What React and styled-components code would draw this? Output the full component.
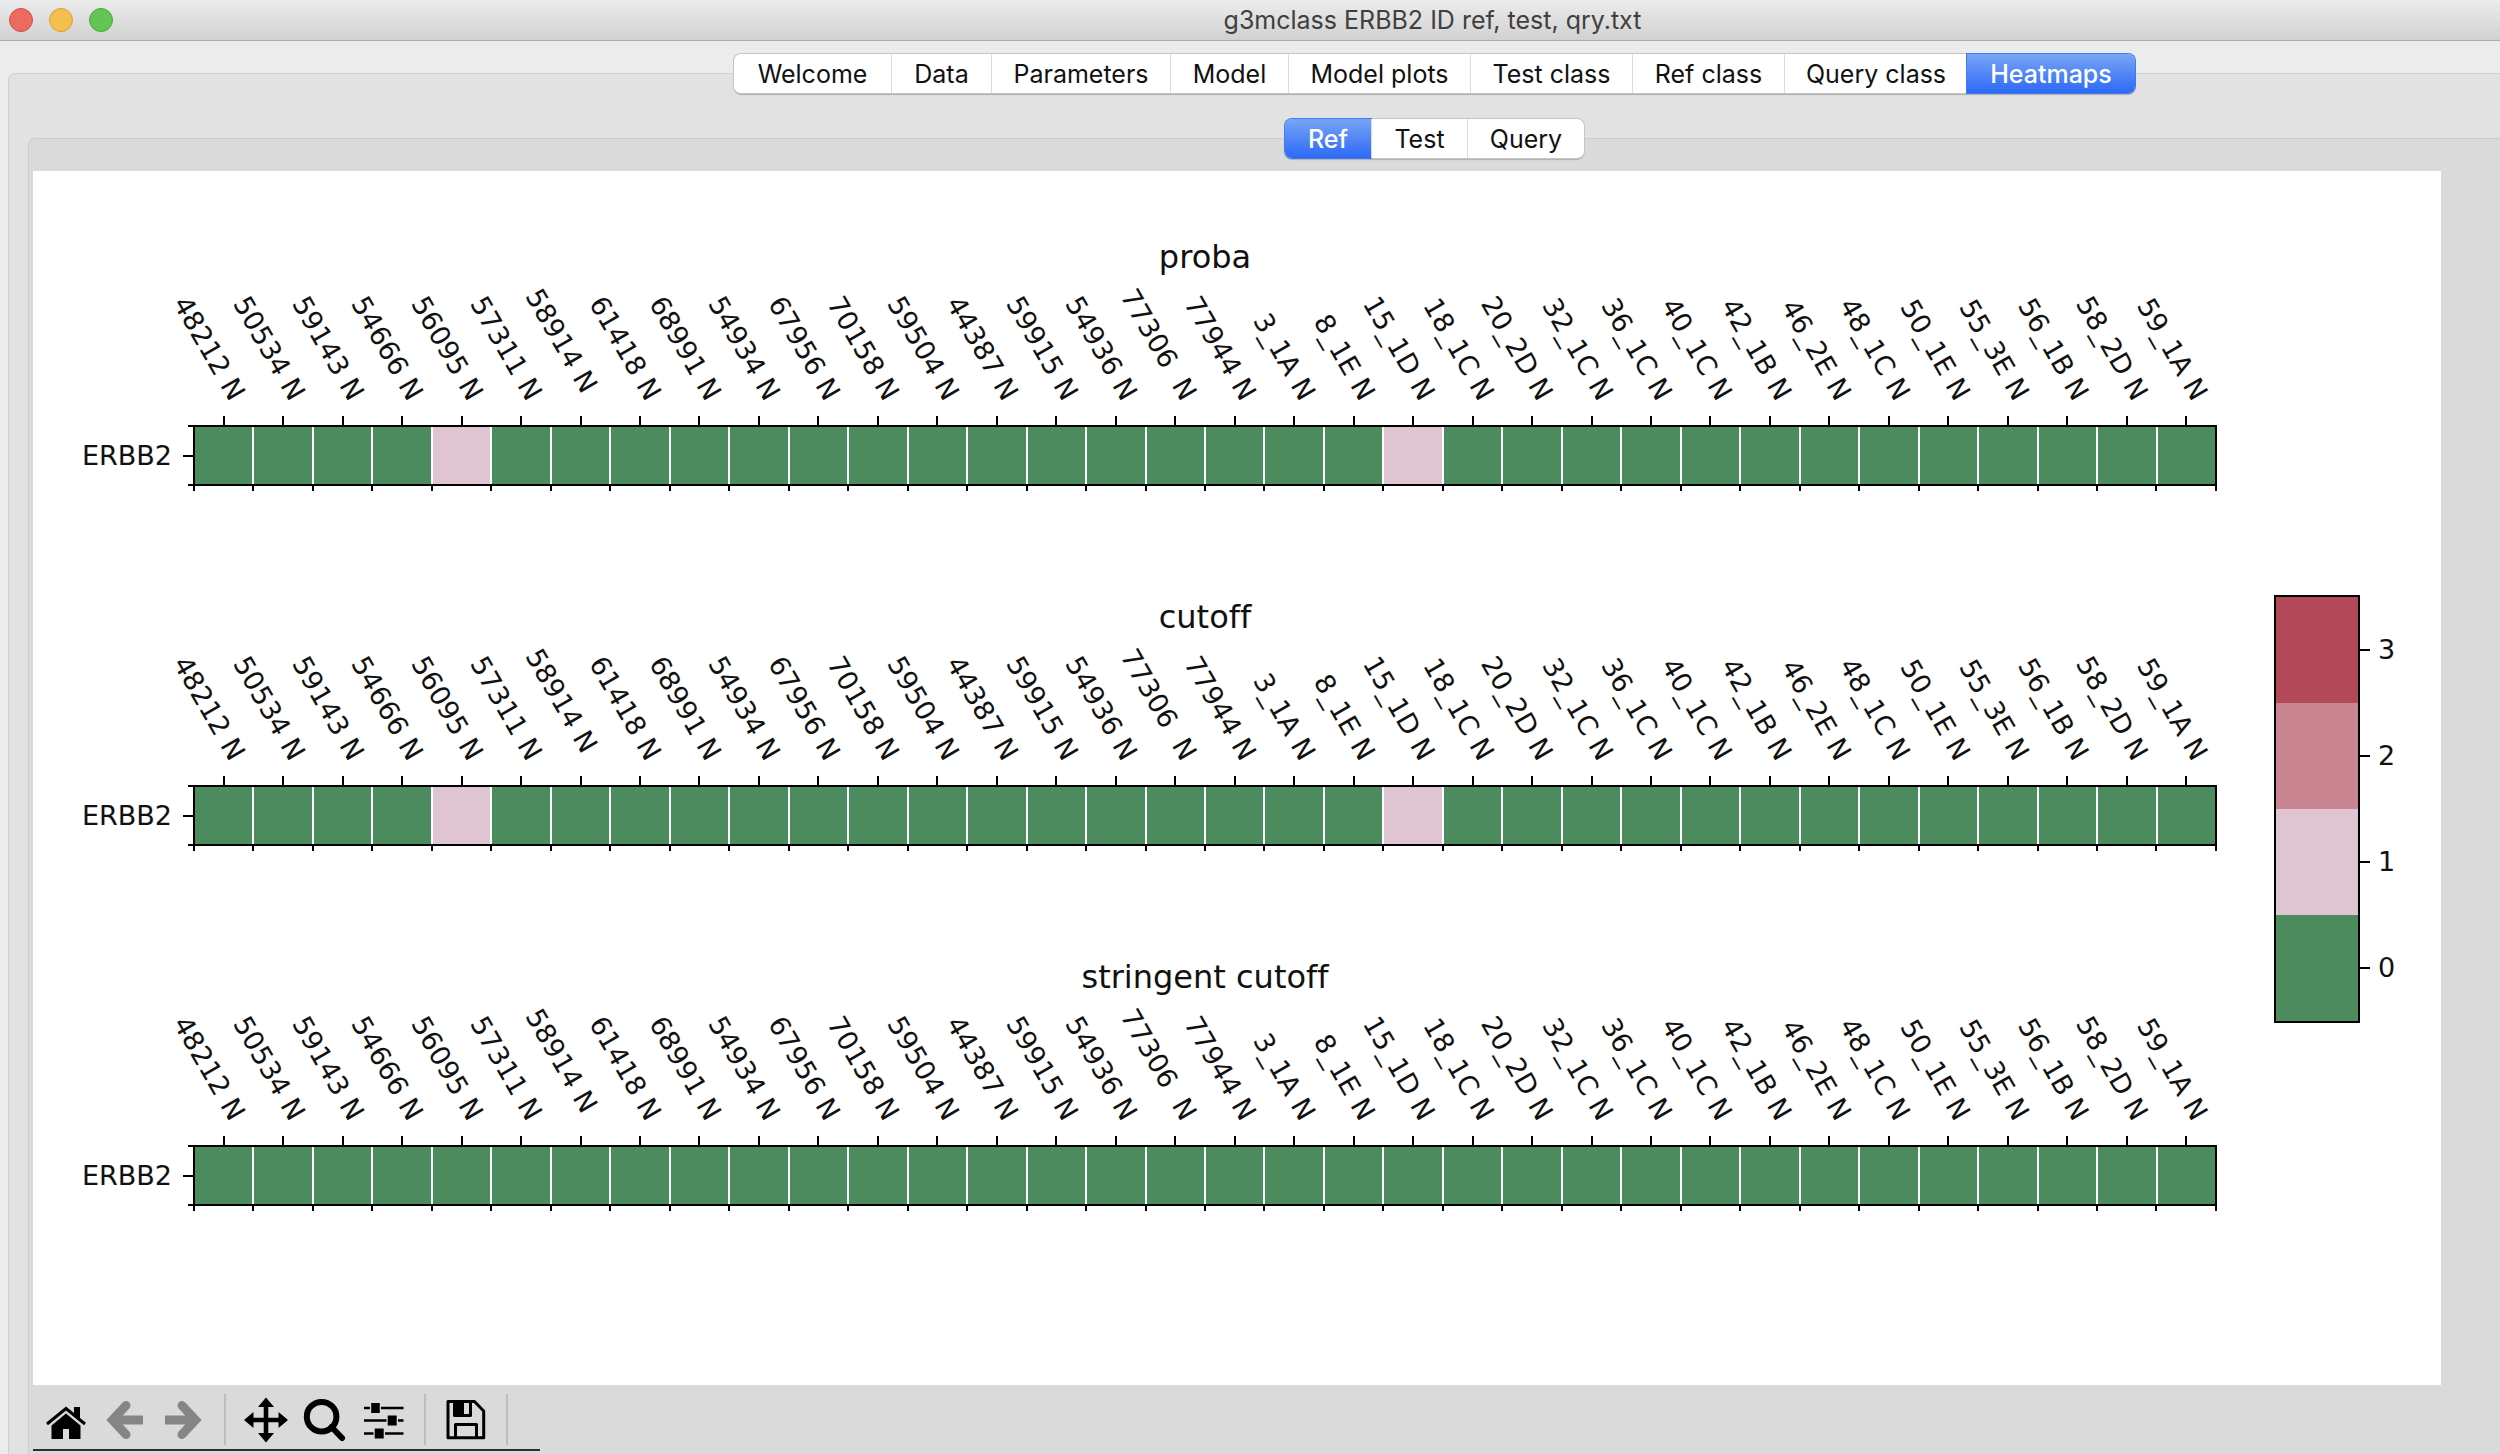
import React, { useState } from "react";
import styled, { createGlobalStyle } from "styled-components";

const Global = createGlobalStyle`
  * { box-sizing: border-box; }
  body { margin: 0; background: #ececec; }
`;

const PALETTE = ["#4c8b5d", "#dfc5d1", "#c98591", "#b34958"];

const SAMPLES = [
  "48212 N", "50534 N", "59143 N", "54666 N", "56095 N", "57311 N", "58914 N ",
  "61418 N", "68991 N", "54934 N", "67956 N", "70158 N", "59504 N", "44387 N",
  "59915 N", "54936 N", "77306  N", "77944 N", "3_1A N", "8_1E N", "15_1D N",
  "18_1C N", "20_2D N", "32_1C N", "36_1C N", "40_1C N", "42_1B N", "46_2E N",
  "48_1C N", "50_1E N", "55_3E N", "56_1B N", "58_2D N", "59_1A N",
];

const classify = (hits) => SAMPLES.map((_, i) => (hits.includes(i) ? 1 : 0));

const PLOTS = [
  { title: "proba", values: classify([4, 20]) },
  { title: "cutoff", values: classify([4, 20]) },
  { title: "stringent cutoff", values: classify([]) },
];

const Window = styled.div`
  display: flex;
  flex-direction: column;
  min-height: 100vh;
  overflow: hidden;
  background: #ececec;
  font-family: Inter, "Liberation Sans", sans-serif;
`;

const TitleBar = styled.header`
  display: flex;
  align-items: center;
  height: 41px;
  padding-left: 9px;
  background: linear-gradient(#ececec, #d1d1d1);
  border-bottom: 1px solid #acacac;
`;

const Lights = styled.div`
  display: flex;
  gap: 16px;
  width: 356px;
`;

const Light = styled.button`
  width: 24px;
  height: 24px;
  padding: 0;
  border: 1px solid ${(p) => p.$edge};
  border-radius: 50%;
  background: ${(p) => p.$fill};
`;

const WindowTitle = styled.h1`
  flex: 1;
  margin: 0;
  font-size: 25px;
  line-height: 32px;
  font-weight: 400;
  text-align: center;
  color: #404040;
`;

const Notebook = styled.div`
  flex: 1;
  display: flex;
  flex-direction: column;
  padding: ${(p) => (p.$nested ? "45px 0 0 19px" : "13px 0 0 8px")};
`;

const TabBar = styled.div`
  position: relative;
  z-index: 1;
  display: flex;
  justify-content: center;
  padding-left: ${(p) => (p.$nested ? 341 : 361)}px;
  margin-bottom: -20px;
`;

const TabGroup = styled.div`
  display: flex;
  height: 39px;
  border-radius: 7px;
  background: #fff;
  box-shadow: 0 0 0 1px #c4c4c4, 0 2px 1px #b0b0b0;
`;

const Tab = styled.button`
  width: ${(p) => p.$width}px;
  padding: 0;
  border: 0;
  border-left: 1px solid #dcdcdc;
  background: transparent;
  color: #111;
  font-family: inherit;
  font-size: 25px;
  line-height: 38px;
  white-space: nowrap;
  &:first-child { border-left: 0; border-radius: 7px 0 0 7px; }
  &:last-child { border-radius: 0 7px 7px 0; }
  &[aria-selected="true"] {
    border-left: 0;
    background: linear-gradient(#78a5f6, #2c69f6);
    box-shadow: 0 0 0 1px #3f7af0;
    color: #fff;
    font-weight: 500;
  }
`;

const Panel = styled.section`
  flex: 1;
  display: flex;
  flex-direction: column;
  border: solid ${(p) => (p.$nested ? "#cccccc" : "#d0d0d0")};
  border-width: 1px 0 0 1px;
  border-top-left-radius: 7px;
  background: ${(p) => (p.$nested ? "#dadada" : "#e2e2e2")};
  padding: ${(p) => (p.$nested ? "32px 59px 3px 4px" : "0")};
`;

const Figure = styled.figure`
  display: flex;
  margin: 0;
  padding: 66px 0 174px;
  background: #fff;
  color: #111;
  font-family: "DejaVu Sans", sans-serif;
`;

const Plots = styled.div`
  flex: 1;
  display: flex;
  flex-direction: column;
  gap: 106px;
`;

const Plot = styled.section`
  display: grid;
  grid-template-columns: 160px 1fr;
`;

const PlotTitle = styled.h2`
  grid-column: 2;
  margin: 0;
  font-size: 32px;
  line-height: 40px;
  font-weight: 400;
  font-variant-ligatures: none;
  text-align: center;
`;

const Columns = styled.div`
  grid-column: 2;
  display: grid;
  grid-template-columns: repeat(${SAMPLES.length}, minmax(0, 1fr));
  gap: 2px;
  padding: 0 2px;
`;

const SampleColumns = styled(Columns)`
  height: 139px;
  padding-bottom: 10px;
`;

const SampleSlot = styled.div`
  display: flex;
  justify-content: flex-end;
  align-items: flex-end;
  padding-right: 50%;
`;

const SampleName = styled.span`
  flex: none;
  white-space: pre;
  font-size: 27px;
  line-height: 32px;
  transform: rotate(60deg);
  transform-origin: bottom right;
`;

const TickX = styled.i`
  justify-self: center;
  width: 2px;
  height: ${(p) => (p.$minor ? 5 : 9)}px;
  background: #000;
`;

const RowHead = styled.div`
  display: flex;
  justify-content: flex-end;
  align-items: center;
  gap: 11px;
`;

const RowName = styled.span`
  font-size: 27px;
  line-height: 32px;
`;

const YTicks = styled.div`
  display: flex;
  flex-direction: column;
  justify-content: space-between;
  align-items: flex-end;
  align-self: stretch;
`;

const TickY = styled.i`
  width: ${(p) => (p.$minor ? 5 : 10)}px;
  height: 2px;
  background: #000;
`;

const Cells = styled(Columns)`
  height: 61px;
  padding: 0;
  border: 2px solid #000;
  background: #fff;
`;

const Cell = styled.div`
  background: ${(p) => PALETTE[p.$value]};
`;

const MinorTicks = styled.div`
  grid-column: 2;
  display: flex;
  justify-content: space-between;
`;

const ColorBar = styled.div`
  display: flex;
  flex: none;
  width: 167px;
  height: 428px;
  margin: 358px 0 0 57px;
`;

const Swatches = styled.div`
  display: flex;
  flex-direction: column;
  width: 86px;
  border: 2px solid #000;
`;

const Swatch = styled(Cell)`
  flex: 1;
`;

const Scale = styled.div`
  display: flex;
  flex-direction: column;
  padding: 2px 0;
`;

const ScaleMark = styled.div`
  flex: 1;
  display: flex;
  align-items: center;
  gap: 8px;
  font-size: 27px;
  line-height: 32px;
`;

const Toolbar = styled.div`
  display: flex;
  align-items: center;
  width: 507px;
  height: 66px;
  padding: 5px 3px 0;
  border-bottom: 2px solid #2e2e2e;
`;

const ToolButton = styled.button`
  display: flex;
  justify-content: center;
  align-items: center;
  width: 59px;
  height: 50px;
  padding: 0;
  border: 0;
  background: transparent;
  color: ${(p) => (p.disabled ? "#858585" : "#000")};
`;

const ToolDivider = styled.span`
  width: 2px;
  height: 51px;
  margin: 0 10px 0 11px;
  background: #bdbdbd;
`;

const ICONS = {
  Home: (
    <g fill="currentColor">
      <path d="M32 12h6v14l-6-5z" />
      <path d="M5 29 24 13.500 43 29" fill="none" stroke="currentColor" strokeWidth="3" />
      <path d="M24 18.500 9.500 30.500V44H21V34h6v10h11.500V30.500z" />
    </g>
  ),
  Back: (
    <g fill="none" stroke="currentColor" strokeWidth="9">
      <path d="M25 10.500 11.500 25 25 39.500" strokeLinecap="round" />
      <path d="M12 25h30" />
    </g>
  ),
  Forward: (
    <g fill="none" stroke="currentColor" strokeWidth="9">
      <path d="M22 10.500 35.500 25 22 39.500" strokeLinecap="round" />
      <path d="M5 25h30" />
    </g>
  ),
  Pan: (
    <g fill="currentColor">
      <path d="M9 22.700h30v4.600H9zM21.700 9h4.600v32h-4.600z" />
      <path d="M24 2.500 32 12H16zM24 47.500 32 38H16zM2 25l9.500-8v16zM46 25l-9.500-8v16z" />
    </g>
  ),
  Zoom: (
    <g fill="none" stroke="currentColor" strokeWidth="6">
      <circle cx="20.600" cy="21.700" r="14.800" />
      <path d="M30.500 32 41 43" strokeLinecap="round" />
    </g>
  ),
  Subplots: (
    <g fill="currentColor">
      <path d="M4 11.700h6v2.600H4zM21 11.700h22.500v2.600H21zM11.200 8h8.600v10h-8.600z" />
      <path d="M4 24.200h22.500v2.600H4zM38 24.200h5.500v2.600H38zM27.700 20.500h9v10h-9z" />
      <path d="M4 37.200h9.500v2.600H4zM25 37.200h18.500v2.600H25zM14.700 33.500h9v10h-9z" />
    </g>
  ),
  Save: (
    <g fill="none" stroke="currentColor" strokeWidth="3" strokeLinejoin="round">
      <path d="M6 6.500h26.500L41.700 16v26.700H6z" />
      <path d="M12.500 7v13.500h16V7" />
      <path d="M13 7.500h7.500v12.500H13z" fill="currentColor" />
      <path d="M13.500 42V29.500h21V42" />
    </g>
  ),
};

function Tool({ name, disabled }) {
  return (
    <ToolButton type="button" aria-label={name} disabled={disabled}>
      <svg width="48" height="50" viewBox="0 0 48 50" aria-hidden="true">
        {ICONS[name]}
      </svg>
    </ToolButton>
  );
}

const MAIN_TABS = [
  ["Welcome", 157], ["Data", 100], ["Parameters", 179], ["Model", 118],
  ["Model plots", 182], ["Test class", 162], ["Ref class", 152],
  ["Query class", 183], ["Heatmaps", 168],
];
const SUB_TABS = [["Ref", 86], ["Test", 96], ["Query", 117]];

function Tabs({ items, initial, nested }) {
  const [active, setActive] = useState(initial);
  return (
    <TabBar $nested={nested}>
      <TabGroup role="tablist">
        {items.map(([name, width]) => (
          <Tab
            key={name}
            type="button"
            role="tab"
            $width={width}
            aria-selected={name === active}
            onClick={() => setActive(name)}
          >
            {name}
          </Tab>
        ))}
      </TabGroup>
    </TabBar>
  );
}

function Heatmap({ title, values }) {
  return (
    <Plot>
      <PlotTitle>{title}</PlotTitle>
      <SampleColumns>
        {SAMPLES.map((name) => (
          <SampleSlot key={name}>
            <SampleName>{name}</SampleName>
          </SampleSlot>
        ))}
      </SampleColumns>
      <Columns>
        {SAMPLES.map((name) => <TickX key={name} />)}
      </Columns>
      <RowHead>
        <RowName>ERBB2</RowName>
        <YTicks>
          <TickY $minor />
          <TickY />
          <TickY $minor />
        </YTicks>
      </RowHead>
      <Cells>
        {values.map((value, i) => <Cell key={SAMPLES[i]} $value={value} />)}
      </Cells>
      <MinorTicks>
        {[...SAMPLES, "end"].map((name) => <TickX key={name} $minor />)}
      </MinorTicks>
    </Plot>
  );
}

export default function App() {
  return (
    <>
      <Global />
      <Window>
        <TitleBar>
          <Lights>
            <Light aria-label="Close" $fill="#ec6a5e" $edge="#d04e42" />
            <Light aria-label="Minimize" $fill="#f5bf4f" $edge="#d9a13a" />
            <Light aria-label="Zoom window" $fill="#62c554" $edge="#4aa73b" />
          </Lights>
          <WindowTitle>g3mclass ERBB2 ID ref, test, qry.txt</WindowTitle>
        </TitleBar>
        <Notebook>
          <Tabs items={MAIN_TABS} initial="Heatmaps" />
          <Panel>
            <Notebook $nested>
              <Tabs items={SUB_TABS} initial="Ref" nested />
              <Panel $nested>
                <Figure>
                  <Plots>
                    {PLOTS.map((plot) => <Heatmap key={plot.title} {...plot} />)}
                  </Plots>
                  <ColorBar>
                    <Swatches>
                      {[3, 2, 1, 0].map((v) => <Swatch key={v} $value={v} />)}
                    </Swatches>
                    <Scale>
                      {[3, 2, 1, 0].map((v) => (
                        <ScaleMark key={v}>
                          <TickY />
                          {v}
                        </ScaleMark>
                      ))}
                    </Scale>
                  </ColorBar>
                </Figure>
                <Toolbar role="toolbar" aria-label="Figure tools">
                  <Tool name="Home" />
                  <Tool name="Back" disabled />
                  <Tool name="Forward" disabled />
                  <ToolDivider />
                  <Tool name="Pan" />
                  <Tool name="Zoom" />
                  <Tool name="Subplots" />
                  <ToolDivider />
                  <Tool name="Save" />
                  <ToolDivider />
                </Toolbar>
              </Panel>
            </Notebook>
          </Panel>
        </Notebook>
      </Window>
    </>
  );
}
